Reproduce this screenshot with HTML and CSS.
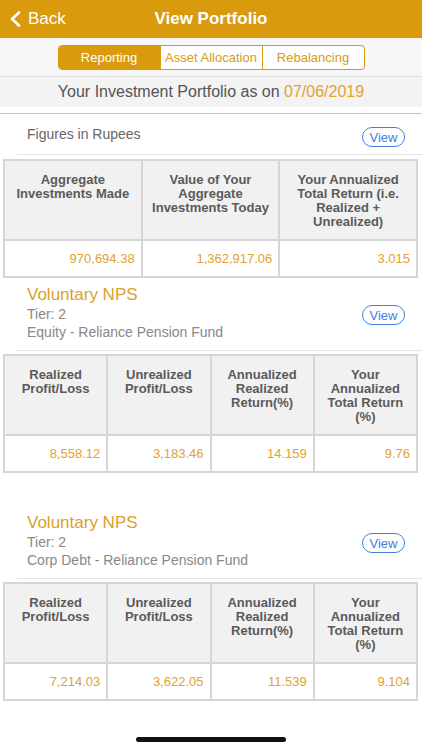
FILE: index.html
```html
<!DOCTYPE html>
<html lang="en">

<head>
    <meta charset="UTF-8">
    <meta name="viewport" content="width=device-width, initial-scale=1.0">
    <title>View Portfolio</title>
    <link rel="stylesheet" href="styles.css">
</head>

<body>
    <div class="topbar">
        <a class="back" href="#">
            <svg width="12" height="16" viewBox="0 0 12 16"><path d="M10 1.5 L3 8 L10 14.5" fill="none" stroke="#fff" stroke-width="2.6" stroke-linecap="round" stroke-linejoin="round"/></svg>
            <span>Back</span>
        </a>
        <h1>View Portfolio</h1>
    </div>

    <div class="tabs-bar">
        <div class="tabs">
            <button class="tab active">Reporting</button>
            <button class="tab">Asset Allocation</button>
            <button class="tab">Rebalancing</button>
        </div>
    </div>

    <div class="as-on">Your Investment Portfolio as on <span class="date">07/06/2019</span></div>

    <div class="summary">
        <div class="section-head">
            <div class="figures">Figures in Rupees</div>
            <button class="view-btn">View</button>
        </div>
        <table class="grid three">
            <tr class="head">
                <th>Aggregate Investments Made</th>
                <th>Value of Your Aggregate Investments Today</th>
                <th>Your Annualized Total Return (i.e. Realized + Unrealized)</th>
            </tr>
            <tr class="data">
                <td>970,694.38</td>
                <td>1,362,917.06</td>
                <td>3.015</td>
            </tr>
        </table>
    </div>

    <div class="fund">
        <div class="section-head">
            <div class="fund-info">
                <div class="fund-name">Voluntary NPS</div>
                <div class="fund-line">Tier: 2</div>
                <div class="fund-line">Equity - Reliance Pension Fund</div>
            </div>
            <button class="view-btn">View</button>
        </div>
        <table class="grid four">
            <tr class="head">
                <th>Realized Profit/Loss</th>
                <th>Unrealized Profit/Loss</th>
                <th>Annualized Realized Return(%)</th>
                <th>Your Annualized Total Return (%)</th>
            </tr>
            <tr class="data">
                <td>8,558.12</td>
                <td>3,183.46</td>
                <td>14.159</td>
                <td>9.76</td>
            </tr>
        </table>
    </div>

    <div class="fund">
        <div class="section-head">
            <div class="fund-info">
                <div class="fund-name">Voluntary NPS</div>
                <div class="fund-line">Tier: 2</div>
                <div class="fund-line">Corp Debt - Reliance Pension Fund</div>
            </div>
            <button class="view-btn">View</button>
        </div>
        <table class="grid four">
            <tr class="head">
                <th>Realized Profit/Loss</th>
                <th>Unrealized Profit/Loss</th>
                <th>Annualized Realized Return(%)</th>
                <th>Your Annualized Total Return (%)</th>
            </tr>
            <tr class="data">
                <td>7,214.03</td>
                <td>3,622.05</td>
                <td>11.539</td>
                <td>9.104</td>
            </tr>
        </table>
    </div>

    <div class="home-indicator"></div>
</body>

</html>
```

FILE: styles.css
```css
body {
    font-family: "Liberation Sans", Arial, sans-serif;
    background-color: #fff;
    margin: 0;
    width: 422px;
    height: 750px;
    overflow: hidden;
    color: #555;
}

.topbar {
    background-color: #d99a0e;
    height: 38px;
    display: flex;
    align-items: center;
    justify-content: center;
    position: relative;
}

.back {
    position: absolute;
    left: 9px;
    top: 0;
    height: 38px;
    display: flex;
    align-items: center;
    gap: 7px;
    color: #fff;
    text-decoration: none;
    font-size: 17px;
}

.topbar h1 {
    margin: 0;
    color: #fff;
    font-size: 17px;
    font-weight: bold;
}

.tabs-bar {
    background-color: #f7f7f7;
    height: 38px;
    border-bottom: 1px solid #e0e0e0;
    display: flex;
    justify-content: center;
    align-items: center;
}

.tabs {
    display: flex;
    width: 305px;
    height: 23px;
    border: 1px solid #d99a0e;
    border-radius: 4px;
    overflow: hidden;
    background-color: #fff;
}

.tab {
    flex: 1;
    border: none;
    border-left: 1px solid #d99a0e;
    background: none;
    padding: 0;
    font-family: inherit;
    font-size: 13px;
    color: #d99a0e;
}

.tab:first-child {
    border-left: none;
}

.tab.active {
    background-color: #d99a0e;
    color: #fff;
}

.as-on {
    background-color: #f3f3f3;
    height: 30px;
    line-height: 30px;
    text-align: center;
    font-size: 16px;
    color: #555;
}

.date {
    color: #e0a32e;
}

.summary {
    margin-top: 6px;
    border-top: 1px solid #e7c27a;
}

.section-head {
    display: flex;
    align-items: center;
    justify-content: space-between;
    margin-left: 17px;
    padding: 0 17px 0 10px;
    border-bottom: 1px solid #e3e3e3;
}

.summary .section-head {
    height: 40px;
}

.figures {
    font-size: 14px;
    color: #666;
}

.view-btn {
    width: 43px;
    height: 20px;
    padding: 0;
    border: 1px solid #3c82dc;
    border-radius: 11px;
    background: #fff;
    color: #3c82dc;
    font-family: inherit;
    font-size: 13px;
}

.summary .view-btn {
    margin-top: 6px;
}

.fund {
    margin-bottom: 33px;
}

.fund .section-head {
    padding-top: 7px;
    padding-bottom: 9px;
}

.fund .view-btn {
    margin-top: 4px;
}

.fund-name {
    font-size: 17px;
    line-height: 20px;
    color: #d9a032;
}

.fund-line {
    font-size: 14px;
    line-height: 18px;
    color: #888;
}

.grid {
    border-collapse: collapse;
    width: 415px;
    margin: 3px 0 0 3px;
    table-layout: fixed;
}

.grid th,
.grid td {
    border: 2px solid #d6d6d6;
}

.grid th {
    background-color: #f1f1f1;
    height: 66px;
    padding: 12px 4px 0;
    vertical-align: top;
    font-size: 13px;
    line-height: 14px;
    font-weight: bold;
    color: #5a5a5a;
}

.grid td {
    height: 35px;
    padding: 0 6px 0 4px;
    text-align: right;
    font-size: 13px;
    color: #e0a32e;
}

.summary .grid {
    margin-top: 4px;
}

.home-indicator {
    position: fixed;
    left: 136px;
    bottom: 8px;
    width: 150px;
    height: 5px;
    border-radius: 3px;
    background-color: #111;
}
```
